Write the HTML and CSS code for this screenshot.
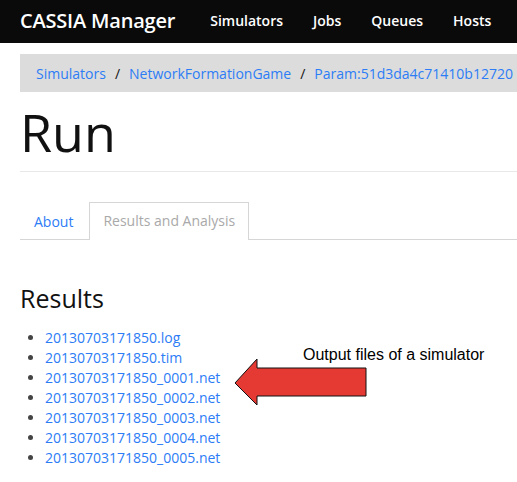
FILE: index.html
```html
<!DOCTYPE html>
<html>
<head>
<meta charset="utf-8">
<title>CASSIA Manager</title>
<link rel="stylesheet" href="styles.css">
</head>
<body>
<nav class="navbar">
  <span class="brand">CASSIA Manager</span>
  <ul class="nav">
    <li>Simulators</li>
    <li>Jobs</li>
    <li>Queues</li>
    <li>Hosts</li>
  </ul>
</nav>
<main class="container">
  <ol class="breadcrumb">
    <li><a href="#">Simulators</a></li>
    <li class="sep">/</li>
    <li><a href="#">NetworkFormationGame</a></li>
    <li class="sep">/</li>
    <li><a href="#">Param:51d3da4c71410b12720</a></li>
  </ol>
  <h1 class="title">Run</h1>
  <div class="tabs">
    <a class="tab" href="#">About</a>
    <span class="tab active">Results and Analysis</span>
  </div>
  <section class="results">
    <h2 class="results-title">Results</h2>
    <ul class="files">
      <li><a href="#">20130703171850.log</a></li>
      <li><a href="#">20130703171850.tim</a></li>
      <li><a href="#">20130703171850_0001.net</a></li>
      <li><a href="#">20130703171850_0002.net</a></li>
      <li><a href="#">20130703171850_0003.net</a></li>
      <li><a href="#">20130703171850_0004.net</a></li>
      <li><a href="#">20130703171850_0005.net</a></li>
    </ul>
    <div class="note">Output files of a simulator</div>
    <svg class="arrow" width="140" height="58" viewBox="0 0 140 58">
      <polygon points="5,30 27,6 27,15 136,15 136,43 27,43 27,52" fill="#e53a34" stroke="#111" stroke-width="1"/>
    </svg>
  </section>
</main>
</body>
</html>
```
FILE: styles.css
```css
html, body {
  margin: 0;
  padding: 0;
  overflow: hidden;
  background: #fff;
}
body {
  font-family: "Open Sans", "Noto Sans", sans-serif;
  font-size: 14px;
  color: #111;
}
a {
  color: #2c7cf6;
  text-decoration: none;
}
.navbar {
  height: 43px;
  background: #0a0a0a;
  display: flex;
  align-items: center;
  padding-left: 20px;
  padding-bottom: 2px;
  box-sizing: border-box;
  white-space: nowrap;
}
.brand {
  color: #fff;
  font-size: 20px;
  font-weight: 600;
  letter-spacing: -0.2px;
  margin-right: 20px;
}
.nav {
  list-style: none;
  margin: 0;
  padding: 0;
  display: flex;
}
.nav li {
  color: #fff;
  font-size: 14px;
  font-weight: 600;
  padding: 0 15px;
}
.container {
  padding: 0 0 0 20px;
  width: 700px;
}
.breadcrumb {
  list-style: none;
  margin: 11px 0 0;
  padding: 0 16px;
  height: 38px;
  background: #dcdcdc;
  display: flex;
  align-items: center;
  white-space: nowrap;
  font-size: 14px;
}
.breadcrumb .sep {
  color: #111;
  padding: 0 9px;
}
.title {
  margin: 11px 0 0;
  font-size: 52px;
  font-weight: 400;
  line-height: 57px;
  height: 68px;
  border-bottom: 1px solid #e8e8e8;
}
.tabs {
  margin-top: 30px;
  display: flex;
  border-bottom: 1px solid #d6d6d6;
  height: 37px;
}
.tab {
  padding: 0 13px;
  line-height: 37px;
  margin-right: 2px;
  font-size: 14px;
  border: 1px solid transparent;
  border-bottom: none;
}
.tab.active {
  color: #a9a9a9;
  border-color: #d6d6d6;
  background: #fff;
  height: 37px;
  margin-bottom: -1px;
  line-height: 36px;
}
.results {
  position: relative;
}
.results-title {
  margin: 43px 0 0;
  font-size: 25px;
  font-weight: 400;
  line-height: 30px;
}
.files {
  margin: 15px 0 0;
  padding-left: 25px;
  line-height: 20px;
  font-size: 14px;
}
.files li::marker {
  color: #444;
}
.note {
  position: absolute;
  left: 283px;
  top: 63px;
  font-family: "Liberation Sans", Arial, sans-serif;
  font-size: 16px;
  color: #000;
  white-space: nowrap;
}
.arrow {
  position: absolute;
  left: 210px;
  top: 70px;
}
```
